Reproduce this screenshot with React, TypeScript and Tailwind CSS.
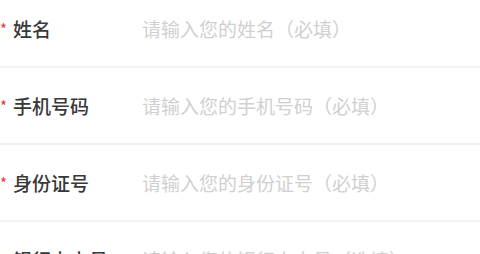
import React from 'react';

const fields = [
  { label: '姓名', required: true },
  { label: '手机号码', required: true },
  { label: '身份证号', required: true },
  { label: '银行卡卡号', required: false },
];

const FormRow = ({ label, required }: { label: string; required: boolean }) => {
  return (
    <div className="flex h-[77px] items-center border-b-2 border-[#f3f3f3]">
      <div className="flex w-[142px] shrink-0 items-center">
        <span className="w-[13px] text-[15px] leading-none text-[#e5383b]">
          {required ? '*' : ''}
        </span>
        <span className="text-[19px] font-medium leading-none text-[#383838]">{label}</span>
      </div>
      <input
        className="min-w-0 flex-1 bg-transparent text-[19px] leading-none text-[#333333] outline-none placeholder:text-[#d0d0d0]"
        placeholder={`请输入您的${label}（${required ? '必填' : '选填'}）`}
      />
    </div>
  );
};

export default function App() {
  return (
    <div
      className="h-[254px] w-[480px] overflow-hidden bg-white"
      style={{ fontFamily: '"Noto Sans CJK SC", "Noto Sans", sans-serif' }}
    >
      <div className="-mt-[9px]">
        {fields.map((f) => (
          <FormRow key={f.label} label={f.label} required={f.required} />
        ))}
      </div>
    </div>
  );
}
